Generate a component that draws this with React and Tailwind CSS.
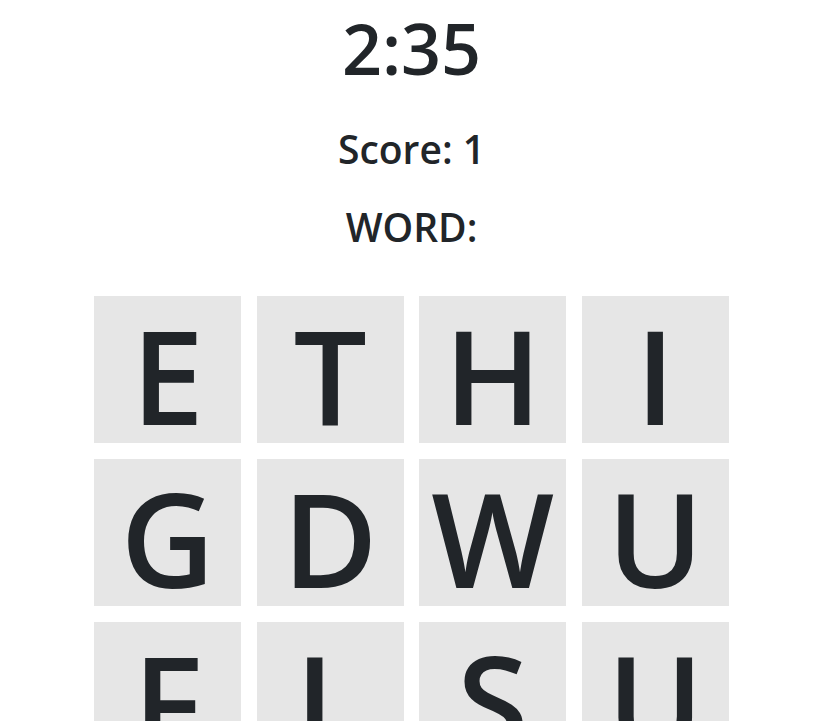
import React, { useState } from "react";

const letters = [
  "E", "T", "H", "I",
  "G", "D", "W", "U",
  "F", "L", "S", "U",
  "A", "N", "R", "O",
];

const Tile = ({ letter }) => (
  <div className="w-[147px] h-[147px] bg-[#e6e6e6] flex items-center justify-center">
    <span className="text-[130px] font-semibold leading-none pt-[10px]">{letter}</span>
  </div>
);

const App = () => {
  const [time] = useState("2:35");
  const [score] = useState(1);
  const [word] = useState("");

  return (
    <div
      className="min-h-screen bg-white text-[#212529] flex flex-col items-center font-semibold"
      style={{ fontFamily: '"Open Sans", "Noto Sans", sans-serif' }}
    >
      <div className="mt-[8px] text-[70px] leading-[80px]">{time}</div>
      <div className="mt-[37px] text-[39px] leading-[48px]">Score: {score}</div>
      <div className="mt-[30px] text-[39px] leading-[48px]">WORD: {word}</div>
      <div className="mt-[45px] grid grid-cols-4 gap-x-[15.5px] gap-y-4">
        {letters.map((l, i) => (
          <Tile key={i} letter={l} />
        ))}
      </div>
    </div>
  );
};

export default App;
